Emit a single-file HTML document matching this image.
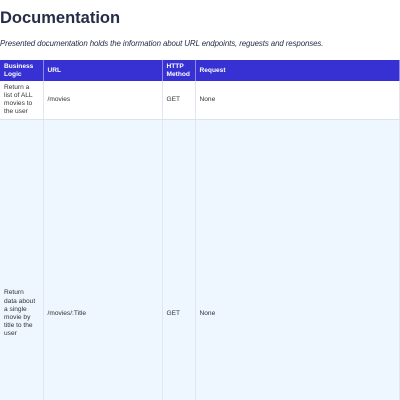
<!DOCTYPE html>
<html><head><style>
html,body{margin:0;width:400px;height:400px;overflow:hidden;background:#fff;font-family:"Liberation Sans",sans-serif;}
#w{position:relative;width:400px;height:400px;overflow:hidden;}
h1{position:absolute;left:0;top:9px;margin:0;font-size:16.5px;font-weight:bold;color:#262d48;}
p{position:absolute;left:0;top:39px;margin:0;font-size:7.9px;font-style:italic;color:#262d48;letter-spacing:-0.1px;}
table{position:absolute;left:0;top:60px;border-collapse:collapse;width:400px;table-layout:fixed;font-size:6.6px;color:#333;}
th{background:#3730d2;color:#fff;text-align:left;font-weight:bold;padding:2px 4px;height:17px;border-right:1px solid #8f8ae8;line-height:7.5px;}
td{padding:2px 4px;border-right:1px solid #e2e6ee;line-height:8.2px;vertical-align:middle;}
td:first-child{padding-right:6px;}
tr.r1 td{height:34px;border-bottom:1px solid #dde3ec;}
tr.r2 td{height:384px;background:#eef6ff;}
</style></head><body><div id="w">
<h1>Documentation</h1>
<p>Presented documentation holds the information about URL endpoints, reguests and responses.</p>
<table>
<colgroup><col style="width:43px"><col style="width:119px"><col style="width:33px"><col></colgroup>
<tr><th>Business Logic</th><th>URL</th><th>HTTP Method</th><th>Request</th></tr>
<tr class="r1"><td>Return a list of ALL movies to the user</td><td>/movies</td><td>GET</td><td>None</td></tr>
<tr class="r2"><td>Return data about a single movie by title to the user</td><td>/movies/:Title</td><td>GET</td><td>None</td></tr>
</table>
</div></body></html>
